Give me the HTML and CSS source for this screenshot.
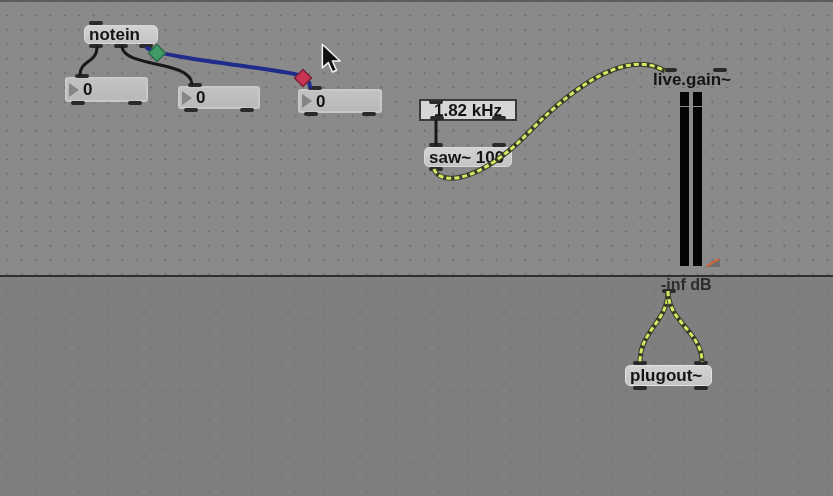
FILE: index.html
```html
<!DOCTYPE html>
<html>
<head>
<meta charset="utf-8">
<link rel="stylesheet" href="styles.css">
</head>
<body>
<div class="patcher">
  <div class="upper"></div>
  <div class="divider"></div>
  <div class="lower"></div>

  <div class="obj box notein"><span>notein</span>
    <div class="ports top start"><i></i></div>
    <div class="ports bottom"><i></i><i></i><i></i></div>
  </div>

  <div class="obj num num1"><b class="tri"></b><span>0</span>
    <div class="ports top start"><i></i></div>
    <div class="ports bottom"><i></i><i></i></div>
  </div>
  <div class="obj num num2"><b class="tri"></b><span>0</span>
    <div class="ports top start"><i></i></div>
    <div class="ports bottom"><i></i><i></i></div>
  </div>
  <div class="obj num num3"><b class="tri"></b><span>0</span>
    <div class="ports top start"><i></i></div>
    <div class="ports bottom"><i></i><i></i></div>
  </div>

  <div class="obj freq"><span>1.82 kHz</span>
    <div class="ports top start inner"><i></i></div>
    <div class="ports bottom inner"><i></i><i></i></div>
  </div>

  <div class="obj box saw"><span>saw~ 100</span>
    <div class="ports top"><i></i><i></i></div>
    <div class="ports bottom start"><i></i></div>
  </div>

  <div class="obj gainlabel"><span>live.gain~</span>
    <div class="ports top"><i></i><i></i></div>
  </div>

  <div class="meters">
    <div class="bar"><div class="seg-top"></div><div class="seg-main"></div></div>
    <div class="bar"><div class="seg-top"></div><div class="seg-main"></div></div>
  </div>

  <svg class="thumb" width="18" height="12" viewBox="0 0 18 12">
    <polygon points="1,11 16,2 16,11" fill="#6e6e6e"/>
    <line x1="3" y1="10" x2="15" y2="3" stroke="#e0602a" stroke-width="2"/>
  </svg>

  <div class="obj inflabel"><span>-inf dB</span>
    <div class="ports bottom start"><i></i></div>
  </div>

  <div class="obj box plugout"><span>plugout~</span>
    <div class="ports top"><i></i><i></i></div>
    <div class="ports bottom"><i></i><i></i></div>
  </div>

  <svg class="cords" width="833" height="496" viewBox="0 0 833 496">
    <path d="M97 47 C 97 63, 80 60, 80 75" class="cord"/>
    <path d="M122 47 C 125 68, 190 60, 192 84" class="cord"/>
    <path d="M147 48 C 160 58, 290 70, 302 76 C 308 79, 310 83, 310 87" class="cord-blue"/>
    <path d="M436 121 L 436 144" class="cord"/>

    <path d="M434 169 C 440 186, 480 183, 530 131 C 580 80, 630 50, 665 71" class="sig-base"/>
    <path d="M434 169 C 440 186, 480 183, 530 131 C 580 80, 630 50, 665 71" class="sig-dash"/>

    <path d="M668 291 C 668 322, 640 330, 640 362" class="sig-base"/>
    <path d="M668 291 C 668 322, 640 330, 640 362" class="sig-dash"/>
    <path d="M668 291 C 668 322, 702 332, 702 362" class="sig-base"/>
    <path d="M668 291 C 668 322, 702 332, 702 362" class="sig-dash"/>

    <rect x="151" y="47" width="12" height="12" transform="rotate(45 157 53)" fill="#3f9c66" stroke="#2a6d48" stroke-width="1.5"/>
    <rect x="297" y="72" width="12" height="12" transform="rotate(45 303 78)" fill="#c83452" stroke="#7d2035" stroke-width="1.5"/>
  </svg>

  <svg class="cursor" width="24" height="32" viewBox="0 0 20 27">
    <path d="M1 1 L1 21 L6 16.5 L9.5 24.5 L13 23 L9.5 15.2 L16 15.2 Z" fill="#111" stroke="#f4f4f4" stroke-width="1.3" stroke-linejoin="round"/>
  </svg>
</div>
</body>
</html>
```
FILE: styles.css
```css
html, body {
  margin: 0;
  padding: 0;
  background: #7f7f7f;
}

.patcher {
  position: relative;
  width: 833px;
  height: 496px;
  overflow: hidden;
  display: flex;
  flex-direction: column;
  filter: blur(0.45px);
  font-family: "Liberation Sans", Arial, sans-serif;
}

.upper {
  height: 275px;
  box-sizing: border-box;
  border-top: 2px solid #5e5e5e;
  background-color: #8a8a8a;
  background-image: radial-gradient(circle, #6c6c6c 0.8px, transparent 1.4px);
  background-size: 14.4px 14.4px;
  background-position: 0 -8px;
}

.divider {
  height: 2px;
  background: #2f2f2f;
}

.lower {
  flex: 1;
  background-color: #7f7f7f;
  background-image: radial-gradient(circle, #747474 0.8px, transparent 1.4px);
  background-size: 14.4px 14.4px;
  background-position: 0 6px;
}

.obj {
  position: absolute;
  box-sizing: border-box;
  font-size: 17px;
  font-weight: bold;
  color: #141414;
  display: flex;
  align-items: center;
  line-height: 1;
  white-space: nowrap;
}

.box {
  background: linear-gradient(#d3d3d3, #c4c4c4);
  border: 1px solid #d9d9d9;
  border-radius: 5px;
  padding-left: 4px;
  overflow: visible;
}

.ports {
  position: absolute;
  left: 4px;
  right: 4px;
  display: flex;
  justify-content: space-between;
}
.ports.start { justify-content: flex-start; }
.ports.top { top: -5px; }
.ports.bottom { bottom: -5px; }
.ports.inner.top { top: -1px; left: 8px; }
.ports.inner.bottom { bottom: -1px; left: 9px; right: 9px; }
.ports i {
  display: block;
  width: 14px;
  height: 4px;
  background: #2a2a2a;
  border-radius: 2px;
}

.notein { left: 84px; top: 25px; width: 74px; height: 19px; }

.num {
  background: linear-gradient(#c2c2c2, #b9b9b9);
  border: 2px solid #c9c9c9;
  border-radius: 3px;
  padding-left: 2px;
  gap: 4px;
}
.num .ports { left: 4px; right: 4px; }
.num .ports.top { left: 8px; }
.tri {
  width: 0;
  height: 0;
  border-top: 7px solid transparent;
  border-bottom: 7px solid transparent;
  border-left: 10px solid #858585;
}
.num1 { left: 65px; top: 77px; width: 83px; height: 25px; }
.num2 { left: 178px; top: 86px; width: 82px; height: 23px; }
.num3 { left: 298px; top: 89px; width: 84px; height: 24px; }

.freq {
  left: 419px;
  top: 99px;
  width: 98px;
  height: 22px;
  background: #d6d6d6;
  border: 2px solid #3a3a3a;
  justify-content: center;
}

.saw { left: 424px; top: 147px; width: 88px; height: 20px; }
.saw .ports.top { left: 4px; right: 5px; }

.gainlabel {
  left: 653px;
  top: 71px;
  height: 16px;
  width: 82px;
}
.gainlabel .ports.top { left: 10px; right: 8px; top: -3px; }

.meters {
  position: absolute;
  left: 680px;
  top: 92px;
  width: 22px;
  height: 174px;
  display: flex;
  gap: 4px;
}
.bar {
  flex: 1;
  display: flex;
  flex-direction: column;
  gap: 1px;
}
.seg-top { height: 14px; background: #050505; }
.seg-main { flex: 1; background: #050505; }

.thumb {
  position: absolute;
  left: 704px;
  top: 256px;
}

.inflabel {
  left: 661px;
  top: 278px;
  height: 13px;
  font-size: 16px;
  color: #2c2c2c;
  overflow: visible;
}
.inflabel .ports { left: 1px; }
.inflabel .ports.bottom { bottom: -2px; }

.plugout { left: 625px; top: 365px; width: 87px; height: 21px; border-color: #e2e2e2; }
.plugout .ports { left: 7px; right: 3px; }

.cords {
  position: absolute;
  left: 0;
  top: 0;
  pointer-events: none;
}
.cord {
  fill: none;
  stroke: #181818;
  stroke-width: 3;
  stroke-linecap: round;
}
.cord-blue {
  fill: none;
  stroke: #202c8c;
  stroke-width: 4;
  stroke-linecap: round;
}
.sig-base {
  fill: none;
  stroke: #3b3b2c;
  stroke-width: 5;
}
.sig-dash {
  fill: none;
  stroke: #d3ea62;
  stroke-width: 3;
  stroke-dasharray: 5 3;
}

.cursor {
  position: absolute;
  left: 321px;
  top: 43px;
}
```
